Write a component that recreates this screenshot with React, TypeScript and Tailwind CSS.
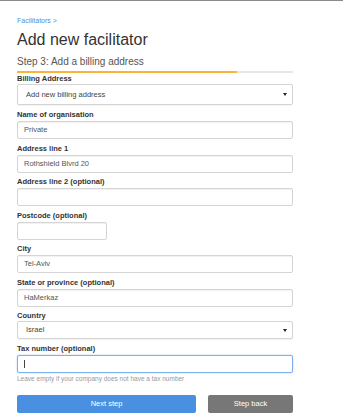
import React from "react";

const font = { fontFamily: '"Liberation Sans", Arial, sans-serif' };

function Label({ children }: { children: React.ReactNode }) {
  return (
    <div className="text-[7.5px] leading-[9px] font-bold text-[#333]">{children}</div>
  );
}

function Input({ value, w = "w-[276px]", focus = false }: { value?: string; w?: string; focus?: boolean }) {
  return (
    <div
      className={`${w} h-[18px] mt-[2px] rounded-[2px] border bg-white flex items-center px-[6px] text-[7.5px] text-[#555] ${
        focus
          ? "border-[#7fb2ea] shadow-[0_0_2px_rgba(102,175,233,0.6)]"
          : "border-[#d4d4d4] shadow-[inset_0_1px_1px_rgba(0,0,0,0.06)]"
      }`}
    >
      {focus ? <span className="w-px h-[8px] bg-[#444]" /> : value}
    </div>
  );
}

function Select({ value, h }: { value: string; h: string }) {
  return (
    <div
      className={`w-[276px] ${h} mt-[1px] rounded-[2px] border border-[#d4d4d4] bg-white flex items-center justify-between pl-[8px] pr-[5px] text-[7.5px] text-[#444] shadow-[0_1px_1px_rgba(0,0,0,0.05)]`}
    >
      <span>{value}</span>
      <span className="w-0 h-0 border-l-[2px] border-r-[2px] border-t-[3px] border-l-transparent border-r-transparent border-t-[#222]" />
    </div>
  );
}

export default function App() {
  return (
    <div className="w-[343px] h-[415px] bg-white overflow-hidden" style={font}>
      <div className="h-px bg-[#8a8a8a]" />
      <div className="pl-[17px]">
        <div className="mt-[16px] text-[7px] leading-[8px] text-[#4a90e2]">Facilitators &gt;</div>
        <div className="mt-[5px] text-[16px] leading-[20px] text-[#333]">Add new facilitator</div>
        <div className="mt-[6px] text-[10px] leading-[12px] text-[#555]">Step 3: Add a billing address</div>
        <div className="mt-[3px] w-[276px] h-[2px] bg-[#e6e6e6] flex">
          <div className="w-[220px] h-full bg-[#fbb33a]" />
        </div>
        <div className="mt-[1px]">
          <Label>Billing Address</Label>
          <Select value="Add new billing address" h="h-[21px]" />
        </div>
        <div className="mt-[5px] flex flex-col gap-[4.5px]">
          <div>
            <Label>Name of organisation</Label>
            <Input value="Private" />
          </div>
          <div>
            <Label>Address line 1</Label>
            <Input value="Rothshield Blvrd 20" />
          </div>
          <div>
            <Label>Address line 2 (optional)</Label>
            <Input />
          </div>
          <div>
            <Label>Postcode (optional)</Label>
            <Input w="w-[90px]" />
          </div>
          <div>
            <Label>City</Label>
            <Input value="Tel-Aviv" />
          </div>
          <div>
            <Label>State or province (optional)</Label>
            <Input value="HaMerkaz" />
          </div>
          <div>
            <Label>Country</Label>
            <Select value="Israel" h="h-[18px]" />
          </div>
          <div>
            <Label>Tax number (optional)</Label>
            <Input focus />
            <div className="mt-[2px] text-[6.5px] leading-[8px] text-[#999]">
              Leave empty if your company does not have a tax number
            </div>
          </div>
        </div>
        <div className="mt-[12px] flex gap-[12px]">
          <div className="w-[179px] h-[18px] rounded-[2px] bg-[#4a90e2] text-white text-[7.5px] flex items-center justify-center">
            Next step
          </div>
          <div className="w-[85px] h-[18px] rounded-[2px] bg-[#777] text-white text-[7.5px] flex items-center justify-center">
            Step back
          </div>
        </div>
      </div>
    </div>
  );
}
